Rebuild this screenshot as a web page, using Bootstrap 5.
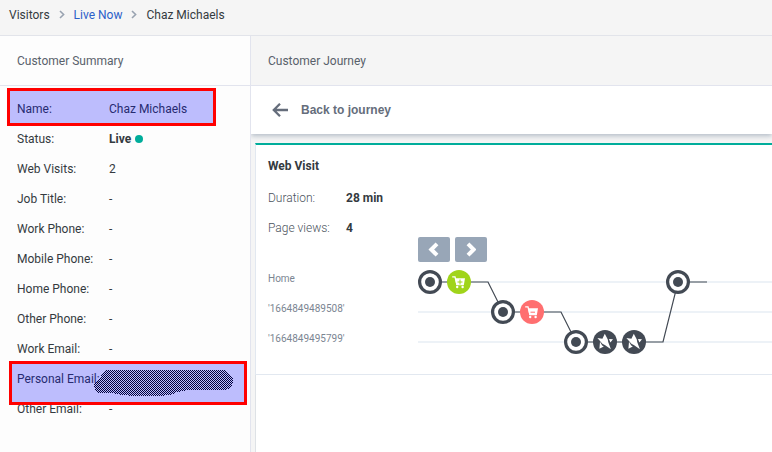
<!DOCTYPE html>
<html lang="en">
<head>
<meta charset="utf-8">
<meta name="viewport" content="width=device-width, initial-scale=1">
<title>Visitors - Chaz Michaels</title>
<link href="https://cdn.jsdelivr.net/npm/bootstrap@5.3.0/dist/css/bootstrap.min.css" rel="stylesheet">
<style>
body{font-family:Roboto,"Liberation Sans",sans-serif;font-size:12px;line-height:18px;color:#343a40;background:#fdfdfd;height:452px}
.topbar{height:36px;padding:0 0 6px 9px;background:#f5f5f5;border-bottom:1px solid #e2e4ea}
.topbar a{color:#2c5fc9}
.crumb-gap{width:24px}
.summary{width:251px;border-right:1px solid #e2e4ee;background:#fdfdfd}
.panel-title{height:50px;padding-left:17px;border-bottom:1px solid #e2e4ee;color:#59616b}
.journey{background:#f5f5f5}
.details{padding:8px 0 0 17px}
.detail-row{height:30px}
.detail-label{width:92px}
.live-dot{width:8px;height:8px;background:#00ad9b;margin-left:4px}
.marker{border:3px solid #f00;background:rgba(0,0,255,.25)}
.marker-name{left:7px;top:88px;width:209px;height:38px}
.marker-email{left:9px;top:361px;width:238px;height:44px}
.scribble{left:92px;top:368px}
.backbar{height:48px;padding-left:21px;background:#fff;color:#656d7b;box-shadow:0 2px 5px rgba(100,120,145,.45);clip-path:inset(0 0 -9px 0)}
.backbar span{font:bold 12px "Liberation Sans",Arial,sans-serif;margin-left:13px}
.visit{margin:9px 0 0 4px;height:232px;border-left:1px solid #e2e8f0;border-top:2px solid #00ad9b;border-bottom:1px solid #e2e8f0;padding-left:12px;background:#fff}
.visit-title{padding-top:12px;margin-bottom:8px;color:#343a40}
.stat-label{width:78px;font-weight:300;color:#4b535d}
.steps{width:150px;padding-top:21px;font-size:10px;color:#7b8592}
.track{margin-top:-6px}
.pager{height:25px;gap:5px}
.pager .btn{width:32px;height:25px;background:#98a6b7;border-radius:2px}
.pager svg{margin-right:2px}
.lower{background:#fff}
</style>
<script src="https://cdn.jsdelivr.net/npm/bootstrap@5.3.0/dist/js/bootstrap.bundle.min.js"></script>
</head>
<body class="d-flex flex-column overflow-hidden position-relative">
<nav class="topbar d-flex align-items-center flex-shrink-0">
  <span>Visitors</span>
  <span class="crumb-gap d-flex justify-content-center"><svg width="6" height="9" viewBox="0 0 6 9" fill="none" stroke="#98a2b0" stroke-width="1.6"><path d="M1 1l3.6 3.5L1 8"/></svg></span>
  <a class="text-decoration-none" href="#">Live Now</a>
  <span class="crumb-gap d-flex justify-content-center"><svg width="6" height="9" viewBox="0 0 6 9" fill="none" stroke="#98a2b0" stroke-width="1.6"><path d="M1 1l3.6 3.5L1 8"/></svg></span>
  <span>Chaz Michaels</span>
</nav>
<div class="d-flex flex-grow-1">
  <aside class="summary flex-shrink-0">
    <div class="panel-title d-flex align-items-center">Customer Summary</div>
    <div class="details">
      <div class="detail-row d-flex align-items-center"><span class="detail-label">Name:</span><span>Chaz Michaels</span></div>
      <div class="detail-row d-flex align-items-center"><span class="detail-label">Status:</span><b>Live</b><i class="live-dot rounded-circle"></i></div>
      <div class="detail-row d-flex align-items-center"><span class="detail-label">Web Visits:</span><span>2</span></div>
      <div class="detail-row d-flex align-items-center"><span class="detail-label">Job Title:</span><span>-</span></div>
      <div class="detail-row d-flex align-items-center"><span class="detail-label">Work Phone:</span><span>-</span></div>
      <div class="detail-row d-flex align-items-center"><span class="detail-label">Mobile Phone:</span><span>-</span></div>
      <div class="detail-row d-flex align-items-center"><span class="detail-label">Home Phone:</span><span>-</span></div>
      <div class="detail-row d-flex align-items-center"><span class="detail-label">Other Phone:</span><span>-</span></div>
      <div class="detail-row d-flex align-items-center"><span class="detail-label">Work Email:</span><span>-</span></div>
      <div class="detail-row d-flex align-items-center"><span class="detail-label">Personal Email:</span></div>
      <div class="detail-row d-flex align-items-center"><span class="detail-label">Other Email:</span><span>-</span></div>
    </div>
  </aside>
  <main class="journey flex-grow-1 d-flex flex-column">
    <div class="panel-title d-flex align-items-center">Customer Journey</div>
    <div class="backbar d-flex align-items-center">
      <svg width="16" height="14" viewBox="0 0 16 14" fill="none" stroke="#656d7b" stroke-width="2.3"><path d="M16 7H2M8 .8L1.8 7L8 13.2"/></svg>
      <span>Back to journey</span>
    </div>
    <section class="visit">
      <div class="visit-title fw-bold">Web Visit</div>
      <div class="detail-row d-flex align-items-center"><span class="stat-label">Duration:</span><b>28 min</b></div>
      <div class="detail-row d-flex align-items-center"><span class="stat-label">Page views:</span><b>4</b></div>
      <div class="d-flex">
        <div class="steps">
          <div class="detail-row d-flex align-items-center">Home</div>
          <div class="detail-row d-flex align-items-center">'1664849489508'</div>
          <div class="detail-row d-flex align-items-center">'1664849495799'</div>
        </div>
        <div class="track">
          <div class="pager d-flex">
            <button class="btn p-0 border-0 d-flex align-items-center justify-content-center" type="button" aria-label="Previous"><svg width="11" height="15" viewBox="0 0 11 15" fill="none" stroke="#fff" stroke-width="4"><path d="M9 1.8L3.3 7.5L9 13.2"/></svg></button>
            <button class="btn p-0 border-0 d-flex align-items-center justify-content-center" type="button" aria-label="Next"><svg width="11" height="15" viewBox="0 0 11 15" fill="none" stroke="#fff" stroke-width="4"><path d="M3 1.8L8.7 7.5L3 13.2"/></svg></button>
          </div>
          <svg class="d-block" width="354" height="96" viewBox="418 262 354 96">
            <defs>
              <g id="page"><circle r="10.4" fill="#fff" stroke="#434a54" stroke-width="3.2"/><circle r="5" fill="#434a54"/></g>
              <g id="cart"><path d="M-6.8-5.2h2.8L-2.2 2.3H4.4" fill="none" stroke="#fff" stroke-width="1.3"/><path d="M-4-3.8H6L4.8 3.2H-2.6z" fill="#fff"/><circle cx="-1.8" cy="5" r="1.2" fill="#fff"/><circle cx="3.6" cy="5" r="1.2" fill="#fff"/></g>
              <g id="event"><circle r="12" fill="#434a54"/><path d="M-.2-8.3L2.8-2.4L3.2 0L5.9 7.2L.2 3.2L-2.6 1.8L-7.6-4L-2.6-3.2zM4-2.9L8-2.8L5.4.6zM-5-.2L-2.8 3.4L-1.2 4.4L-5.6 6.7z" fill="#fff"/></g>
            </defs>
            <path d="M418 282H772M418 312H772M418 342H772" stroke="#edf2f7" stroke-width="2"/>
            <path d="M430 282H488L503 312H561L576 342H663L678 282H707" fill="none" stroke="#434a54" stroke-width="1.2"/>
            <use href="#page" x="430" y="282"/>
            <circle cx="459" cy="282" r="12" fill="#a0d41a"/><use href="#cart" x="459" y="282"/><path d="M457.5 282h5m-2.5-2.5v5" stroke="#a0d41a"/>
            <use href="#page" x="503" y="312"/>
            <circle cx="532" cy="312" r="12" fill="#ff6f70"/><use href="#cart" x="532" y="312"/><path d="M530.5 312.2h4.5" stroke="#ff6f70"/>
            <use href="#page" x="576" y="342"/>
            <use href="#event" x="605" y="342"/>
            <use href="#event" x="634" y="342"/>
            <use href="#page" x="678" y="282"/>
          </svg>
        </div>
      </div>
    </section>
    <div class="lower flex-grow-1 ms-1 border-start"></div>
  </main>
</div>
<div class="marker marker-name position-absolute"></div>
<div class="marker marker-email position-absolute"></div>
<svg class="scribble position-absolute" width="144" height="30" viewBox="92 368 144 30" shape-rendering="crispEdges">
  <defs><pattern id="hatch" width="2" height="2" patternUnits="userSpaceOnUse"><path d="M0 0h1v1H0zM1 1h1v1H1z" fill="#00003c"/></pattern></defs>
  <path d="M107 370H224Q233 374 233 381Q232 390 223 390H190Q178 391 173 394Q166 396 155 396H133Q120 395 112 393H99Q94 391 94 384Q95 381 100 379Q102 371 107 370Z" fill="url(#hatch)"/>
</svg>
</body>
</html>
